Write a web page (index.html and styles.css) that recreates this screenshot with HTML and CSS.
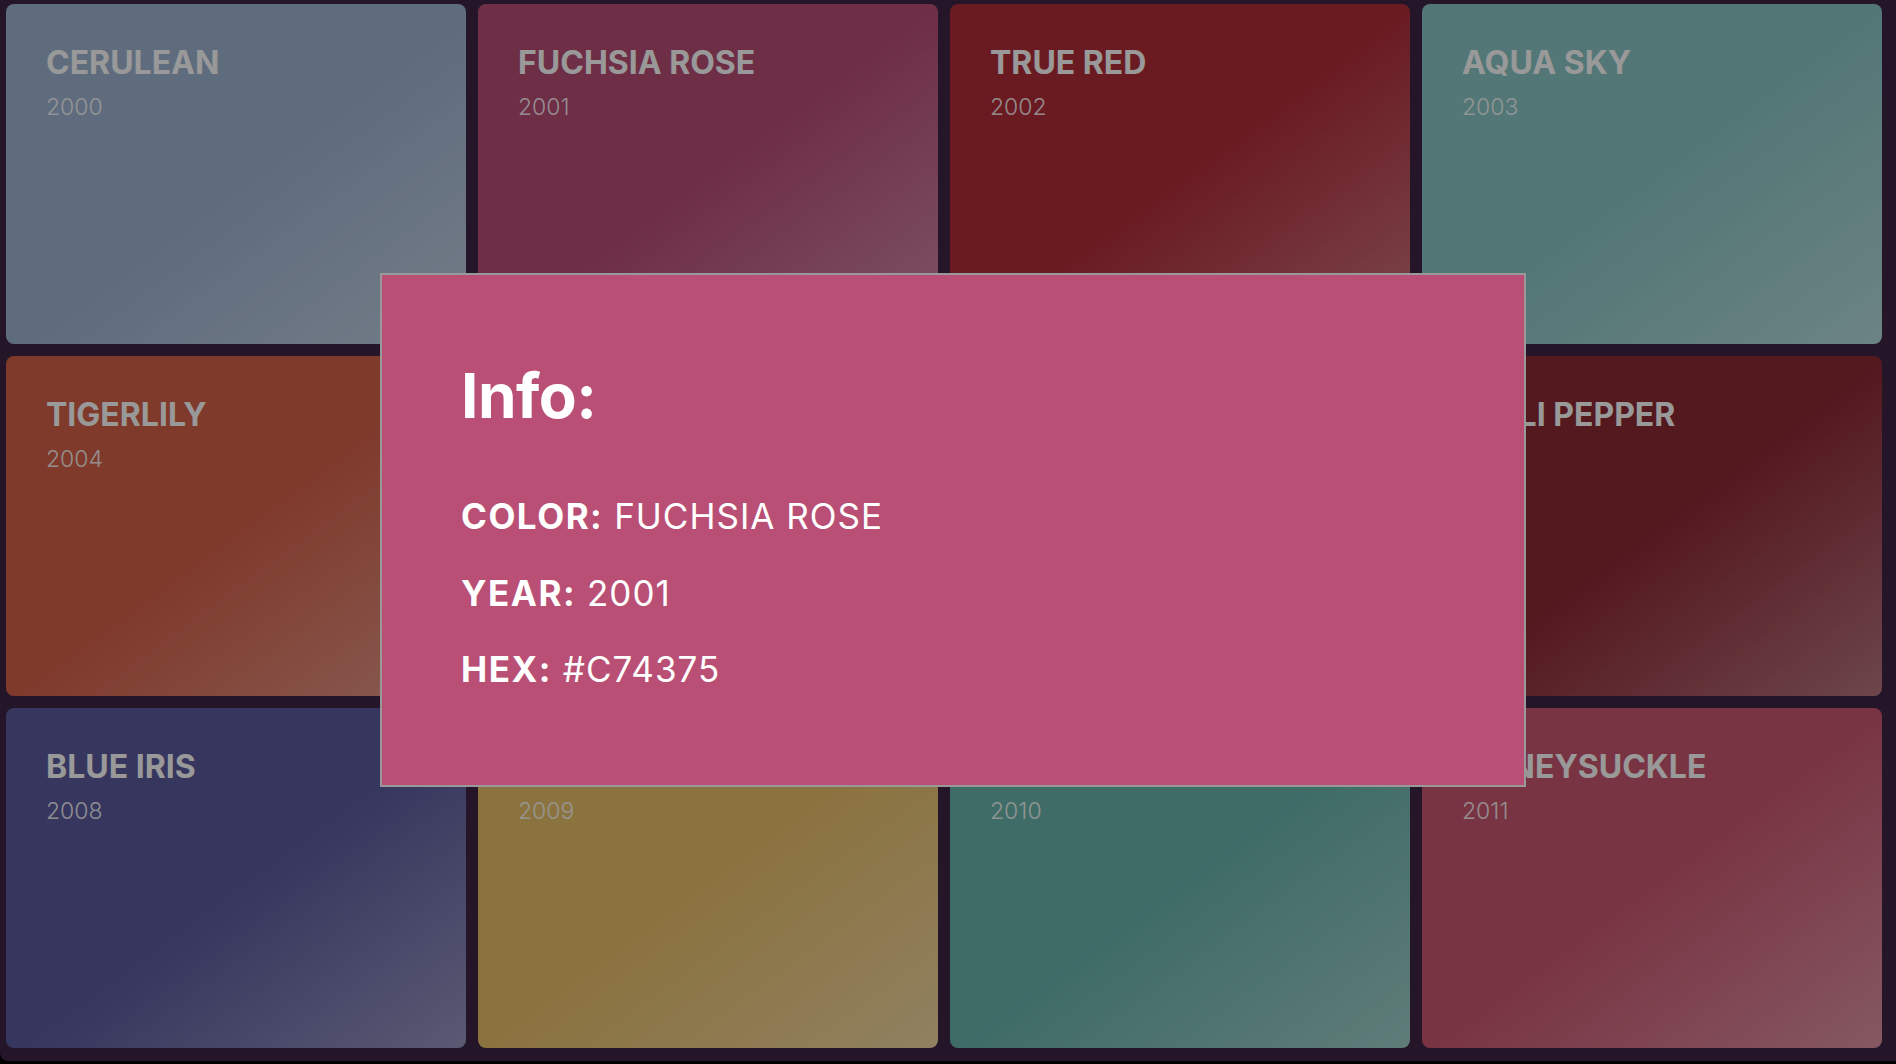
FILE: index.html
```html
<!DOCTYPE html>
<html lang="en">
<head>
<meta charset="utf-8">
<title>Pantone Colors of the Year</title>
<link rel="stylesheet" href="styles.css">
</head>
<body>
<main class="board">
  <section class="grid">
    <article class="swatch" style="--swatch:#9eb4d2"><h2 class="swatch-name">CERULEAN</h2><p class="swatch-year">2000</p></article>
    <article class="swatch" style="--swatch:#b74d76"><h2 class="swatch-name">FUCHSIA ROSE</h2><p class="swatch-year">2001</p></article>
    <article class="swatch" style="--swatch:#b12d39"><h2 class="swatch-name">TRUE RED</h2><p class="swatch-year">2002</p></article>
    <article class="swatch" style="--swatch:#8ac6c6"><h2 class="swatch-name">AQUA SKY</h2><p class="swatch-year">2003</p></article>
    <article class="swatch" style="--swatch:#d46149"><h2 class="swatch-name">TIGERLILY</h2><p class="swatch-year">2004</p></article>
    <article class="swatch" style="--swatch:#53b0ae"><h2 class="swatch-name">BLUE TURQUOISE</h2><p class="swatch-year">2005</p></article>
    <article class="swatch" style="--swatch:#decdbe"><h2 class="swatch-name">SAND DOLLAR</h2><p class="swatch-year">2006</p></article>
    <article class="swatch" style="--swatch:#8c2834"><h2 class="swatch-name">CHILI PEPPER</h2><p class="swatch-year">2007</p></article>
    <article class="swatch" style="--swatch:#5a5a9d"><h2 class="swatch-name">BLUE IRIS</h2><p class="swatch-year">2008</p></article>
    <article class="swatch" style="--swatch:#e8c06b"><h2 class="swatch-name">MIMOSA</h2><p class="swatch-year">2009</p></article>
    <article class="swatch" style="--swatch:#69b4ac"><h2 class="swatch-name">TURQUOISE</h2><p class="swatch-year">2010</p></article>
    <article class="swatch" style="--swatch:#ca5770"><h2 class="swatch-name">HONEYSUCKLE</h2><p class="swatch-year">2011</p></article>
  </section>
</main>
<div class="backdrop"></div>
<div class="dialog" role="dialog" aria-modal="true">
  <h1 class="dialog-title">Info:</h1>
  <p class="dialog-row"><b>COLOR:</b> FUCHSIA ROSE</p>
  <p class="dialog-row"><b>YEAR:</b> 2001</p>
  <p class="dialog-row"><b>HEX:</b> #C74375</p>
</div>
</body>
</html>
```
FILE: styles.css
```css
html {
  background: #000;
}

body {
  margin: 0;
  font-family: Inter, "Noto Sans", "Liberation Sans", sans-serif;
  color: #fff;
  height: 1064px;
  overflow: hidden;
}

.board {
  height: 1061px;
  box-sizing: border-box;
  padding: 4px 14px 13px 6px;
  background: #3c2543;
  border-bottom-left-radius: 8px;
}

.grid {
  display: grid;
  grid-template-columns: repeat(4, 460px);
  grid-template-rows: repeat(3, 340px);
  gap: 12px;
}

.swatch {
  border-radius: 8px;
  padding: 38px 40px;
  background-color: var(--swatch);
  background-image: linear-gradient(to bottom right, rgba(255, 255, 255, 0) 50%, rgba(255, 255, 255, 0.36) 100%);
}

.swatch-name {
  margin: 0 0 9px;
  font-size: 32px;
  line-height: 41px;
  font-weight: 700;
  letter-spacing: 0;
}

.swatch-year {
  margin: 0;
  font-size: 23px;
  line-height: 30px;
  font-weight: 300;
  color: rgba(255, 255, 255, 0.9);
}

.backdrop {
  position: fixed;
  inset: 0;
  background: rgba(0, 0, 0, 0.4);
}

.dialog {
  position: fixed;
  top: 273px;
  left: 380px;
  width: 1146px;
  height: 514px;
  box-sizing: border-box;
  padding: 84px 79px;
  background: #b94f75;
  border: 2px solid #999;
}

.dialog-title {
  margin: 0 0 45px;
  font-size: 62px;
  line-height: 74px;
  font-weight: 700;
  letter-spacing: -0.5px;
}

.dialog-row {
  margin: 0;
  font-size: 35px;
  line-height: 76.5px;
  font-weight: 400;
  letter-spacing: 1px;
}

.dialog-row b {
  font-weight: 700;
  letter-spacing: 1.5px;
}
```
